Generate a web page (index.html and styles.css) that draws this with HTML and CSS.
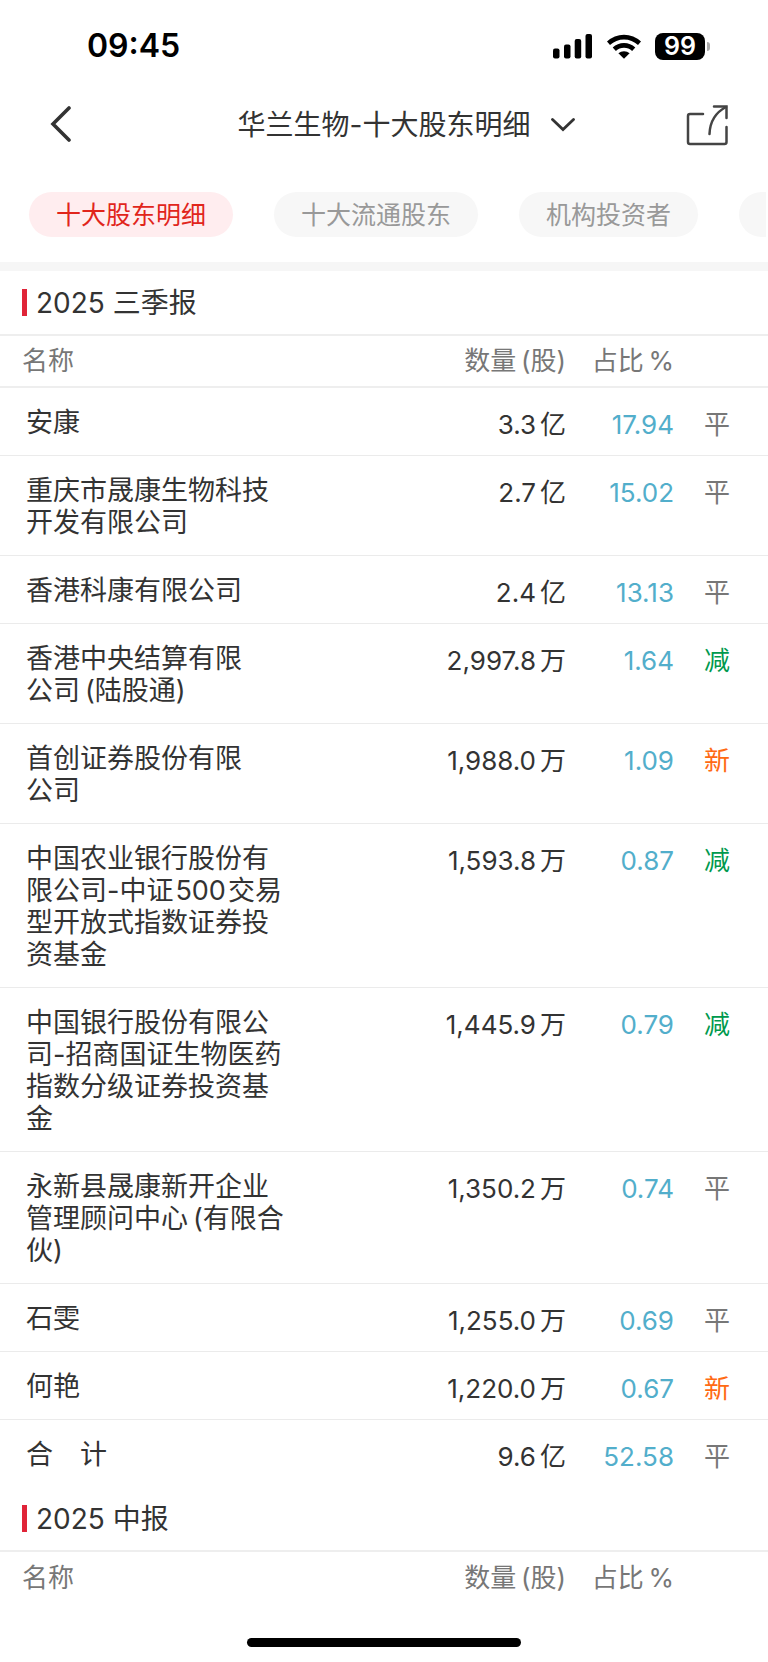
FILE: index.html
```html
<!DOCTYPE html>
<html lang="zh-CN">
<head>
    <meta charset="UTF-8">
    <meta name="viewport" content="width=device-width, initial-scale=1.0">
    <title>华兰生物-十大股东明细</title>
    <link rel="stylesheet" href="styles.css">
</head>
<body>
    <div class="status-bar">
        <span class="time">09:45</span>
        <div class="status-icons">
            <svg class="signal" width="40" height="26" viewBox="0 0 40 26">
                <rect x="0" y="15.5" width="6.5" height="10" rx="2"/>
                <rect x="11" y="11.5" width="6.5" height="14" rx="2"/>
                <rect x="21.7" y="6" width="6.5" height="19.5" rx="2"/>
                <rect x="32.5" y="1" width="6.5" height="24.5" rx="2"/>
            </svg>
            <svg class="wifi" width="36" height="26" viewBox="0 0 36 26">
                <path d="M1 8.6a24.5 24.5 0 0 1 34 0l-3 3.4a20.5 20.5 0 0 0-28 0z"/>
                <path d="M6.7 14.6a16.3 16.3 0 0 1 22.6 0l-3.2 3.5a11.6 11.6 0 0 0-16.200 0z"/>
                <path d="M12.4 20.300a8.400 8.400 0 0 1 11.200 0L18 25.800z"/>
            </svg>
            <div class="battery">
                <span class="level">99</span>
                <span class="cap"></span>
            </div>
        </div>
    </div>

    <header class="header">
        <button class="back" aria-label="返回">
            <svg width="22" height="38" viewBox="0 0 22 38">
                <path d="M19 2L3 18l16 16" fill="none" stroke="#333" stroke-width="3.6" stroke-linecap="round"/>
            </svg>
        </button>
        <button class="title">
            <span>华兰生物-十大股东明细</span>
            <svg width="24" height="14" viewBox="0 0 24 14">
                <path d="M1.5 1.5L12 11.5l10.5-10" fill="none" stroke="#333" stroke-width="2.8" stroke-linecap="round"/>
            </svg>
        </button>
        <button class="share" aria-label="分享">
            <svg width="42" height="42" viewBox="0 0 42 42">
                <g fill="none" stroke="#444" stroke-width="2.5" stroke-linecap="round">
                    <path d="M17 10H4a2 2 0 0 0-2 2v26a2 2 0 0 0 2 2h34.500a2 2 0 0 0 2-2V23"/>
                    <path d="M28 2.500h12.500V14"/>
                    <path d="M40 3C29.500 8.500 24 17 23.500 30"/>
                </g>
            </svg>
        </button>
    </header>

    <nav class="tabs">
        <button class="tab active">十大股东明细</button>
        <button class="tab">十大流通股东</button>
        <button class="tab">机构投资者</button>
        <button class="tab more" aria-label="更多"></button>
    </nav>

    <main>
        <section>
            <h2>2025 三季报</h2>
            <table>
                <thead>
                    <tr>
                        <th class="name">名称</th>
                        <th class="qty">数量&thinsp;(股)</th>
                        <th class="pct">占比&thinsp;%</th>
                        <th class="flag"></th>
                    </tr>
                </thead>
                <tbody>
                    <tr>
                        <td class="name">安康</td>
                        <td class="qty">3.3<span class="unit">亿</span></td>
                        <td class="pct">17.94</td>
                        <td class="flag">平</td>
                    </tr>
                    <tr>
                        <td class="name">重庆市晟康生物科技<br>开发有限公司</td>
                        <td class="qty">2.7<span class="unit">亿</span></td>
                        <td class="pct">15.02</td>
                        <td class="flag">平</td>
                    </tr>
                    <tr>
                        <td class="name">香港科康有限公司</td>
                        <td class="qty">2.4<span class="unit">亿</span></td>
                        <td class="pct">13.13</td>
                        <td class="flag">平</td>
                    </tr>
                    <tr>
                        <td class="name">香港中央结算有限<br>公司&thinsp;(陆股通)</td>
                        <td class="qty">2,997.8<span class="unit">万</span></td>
                        <td class="pct">1.64</td>
                        <td class="flag down">减</td>
                    </tr>
                    <tr>
                        <td class="name">首创证券股份有限<br>公司</td>
                        <td class="qty">1,988.0<span class="unit">万</span></td>
                        <td class="pct">1.09</td>
                        <td class="flag new">新</td>
                    </tr>
                    <tr>
                        <td class="name">中国农业银行股份有<br>限公司-中证<span class="num">500</span>交易<br>型开放式指数证券投<br>资基金</td>
                        <td class="qty">1,593.8<span class="unit">万</span></td>
                        <td class="pct">0.87</td>
                        <td class="flag down">减</td>
                    </tr>
                    <tr>
                        <td class="name">中国银行股份有限公<br>司-招商国证生物医药<br>指数分级证券投资基<br>金</td>
                        <td class="qty">1,445.9<span class="unit">万</span></td>
                        <td class="pct">0.79</td>
                        <td class="flag down">减</td>
                    </tr>
                    <tr>
                        <td class="name">永新县晟康新开企业<br>管理顾问中心&thinsp;(有限合<br>伙)</td>
                        <td class="qty">1,350.2<span class="unit">万</span></td>
                        <td class="pct">0.74</td>
                        <td class="flag">平</td>
                    </tr>
                    <tr>
                        <td class="name">石雯</td>
                        <td class="qty">1,255.0<span class="unit">万</span></td>
                        <td class="pct">0.69</td>
                        <td class="flag">平</td>
                    </tr>
                    <tr>
                        <td class="name">何艳</td>
                        <td class="qty">1,220.0<span class="unit">万</span></td>
                        <td class="pct">0.67</td>
                        <td class="flag new">新</td>
                    </tr>
                    <tr>
                        <td class="name">合&emsp;计</td>
                        <td class="qty">9.6<span class="unit">亿</span></td>
                        <td class="pct">52.58</td>
                        <td class="flag">平</td>
                    </tr>
                </tbody>
            </table>
        </section>

        <section>
            <h2>2025 中报</h2>
            <table>
                <thead>
                    <tr>
                        <th class="name">名称</th>
                        <th class="qty">数量&thinsp;(股)</th>
                        <th class="pct">占比&thinsp;%</th>
                        <th class="flag"></th>
                    </tr>
                </thead>
            </table>
        </section>
    </main>

    <footer class="home">
        <div class="home-indicator"></div>
    </footer>
</body>
</html>
```
FILE: styles.css
```css
* {
    box-sizing: border-box;
}

body {
    display: flex;
    flex-direction: column;
    min-height: 100vh;
    margin: 0;
    background-color: #fff;
    color: #333;
    font-family: Inter, "Noto Sans CJK SC", sans-serif;
    font-size: 26px;
    line-height: 32px;
}

button {
    margin: 0;
    padding: 0;
    border: none;
    background: none;
    color: inherit;
    font: inherit;
    cursor: pointer;
}

svg {
    display: block;
}

/* status bar */
.status-bar {
    display: flex;
    justify-content: space-between;
    align-items: center;
    height: 92px;
    padding: 0 58px 0 87px;
    color: #000;
}

.time {
    font-size: 32px;
    font-weight: 600;
}

.status-icons {
    display: flex;
    align-items: center;
    gap: 13px;
}

.battery {
    display: flex;
    align-items: center;
    gap: 2px;
}

.level {
    width: 50px;
    border-radius: 8px;
    background-color: #000;
    color: #fff;
    font-size: 25px;
    font-weight: 600;
    line-height: 27px;
    text-align: center;
}

.cap {
    width: 3px;
    height: 9px;
    border-radius: 0 4px 4px 0;
    background-color: #aaa;
}

/* header */
.header {
    display: grid;
    grid-template-columns: 1fr auto 1fr;
    align-items: center;
    height: 64px;
    padding: 2px 40px 0;
}

.back {
    justify-self: start;
    margin-left: 10px;
}

.share {
    justify-self: end;
}

.title {
    display: flex;
    align-items: center;
    gap: 21px;
    padding-left: 45px;
    font-size: 28px;
}

/* tabs */
.tabs {
    display: flex;
    gap: 41px;
    margin-right: 2px;
    padding: 36px 0 25px 29px;
    overflow: hidden;
}

.tab {
    flex: none;
    height: 45px;
    padding: 0 27px;
    border-radius: 23px;
    background-color: #f7f7f7;
    color: #999;
    font-size: 25px;
}

.tab.active {
    background-color: #ffedef;
    color: #e1251b;
}

.tab.more {
    width: 179px;
}

main {
    flex: 1;
    border-top: 9px solid #f6f6f6;
}

h2 {
    display: flex;
    align-items: center;
    gap: 9px;
    height: 63px;
    margin: 0;
    padding-left: 22px;
    font-size: 28px;
    font-weight: 400;
}

h2::before {
    content: "";
    width: 5px;
    height: 27px;
    background-color: #e02438;
}

/* holders table */
table {
    width: 100%;
    border-spacing: 0;
    table-layout: fixed;
}

th {
    height: 54px;
    padding: 0;
    border-top: 2px solid #eee;
    border-bottom: 2px solid #eee;
    color: #777;
    font-weight: 400;
    text-align: right;
}

th.name {
    padding-left: 22px;
    text-align: left;
}

td {
    padding: 21px 0 14px;
    border-bottom: 1px solid #ebebeb;
    text-align: right;
    vertical-align: top;
}

td.name {
    padding: 19px 0 16px 26px;
    font-size: 27px;
    text-align: left;
}

.qty {
    width: 180px;
}

.pct {
    width: 108px;
}

td.pct {
    color: #52aecb;
}

.flag {
    width: 94px;
}

td.flag {
    padding-left: 30px;
    color: #777;
    text-align: left;
}

td.down {
    color: #00994d;
}

td.new {
    color: #ff6a13;
}

.unit {
    margin-left: 4px;
}

.num {
    margin: 0 2px;
}

tbody tr:last-child td,
section:last-child th {
    border-bottom: none;
}

.home {
    display: flex;
    justify-content: center;
    padding: 15px 0;
}

.home-indicator {
    width: 274px;
    height: 9px;
    border-radius: 5px;
    background-color: #000;
}
```
